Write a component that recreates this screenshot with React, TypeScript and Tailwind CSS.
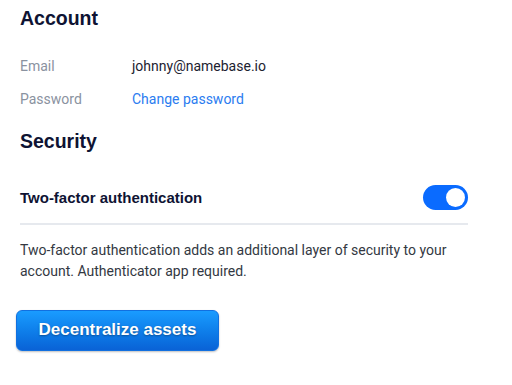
import React from "react";

export default function App() {
  return (
    <div className="min-h-[385px] w-[512px] bg-white" style={{ fontFamily: "Roboto, 'Liberation Sans', sans-serif" }}>
      <div className="w-[468px] pl-[20px]">
        <h2 className="pt-[6px] font-['Liberation_Sans',Arial,sans-serif] text-[19.5px] font-bold leading-[24px] text-[#0e1333]">Account</h2>
        <div className="mt-[26px] flex h-[20px] items-center text-[14px] leading-[20px]">
          <span className="w-[112px] text-[#8a92a0]">Email</span>
          <span className="text-[#1c2230]">johnny@namebase.io</span>
        </div>
        <div className="mt-[13px] flex h-[20px] items-center text-[14px] leading-[20px]">
          <span className="w-[112px] text-[#8a92a0]">Password</span>
          <a className="text-[#2b7cf0]">Change password</a>
        </div>
        <h2 className="mt-[20px] font-['Liberation_Sans',Arial,sans-serif] text-[19.5px] font-bold leading-[24px] text-[#0e1333]">Security</h2>
        <div className="mt-[32px] flex h-[25px] items-center justify-between">
          <span className="font-['Liberation_Sans',Arial,sans-serif] text-[15px] font-bold leading-[20px] text-[#0e1333]">Two-factor authentication</span>
          <div className="flex h-[25px] w-[45px] items-center justify-end rounded-full bg-[#0a6bff] pr-[3px]">
            <div className="h-[19px] w-[19px] rounded-full bg-white" />
          </div>
        </div>
        <div className="mt-[13px] h-[1.5px] bg-[#e6e9ee]" />
        <p className="mt-[15px] text-[14px] leading-[21px] text-[#333842]">
          Two-factor authentication adds an additional layer of security to your account. Authenticator app required.
        </p>
        <button
          className="-ml-[4px] mt-[28px] flex h-[41px] w-[203px] items-center justify-center rounded-[6px] border border-[#1170e0] bg-gradient-to-b from-[#1a9cff] to-[#0a62d6] font-['Liberation_Sans',Arial,sans-serif] text-[17px] font-bold text-white shadow-[0_1px_2px_rgba(0,0,0,0.25)]"
          style={{ textShadow: "0 1px 2px rgba(0,0,0,0.35)" }}
        >
          Decentralize assets
        </button>
      </div>
    </div>
  );
}
